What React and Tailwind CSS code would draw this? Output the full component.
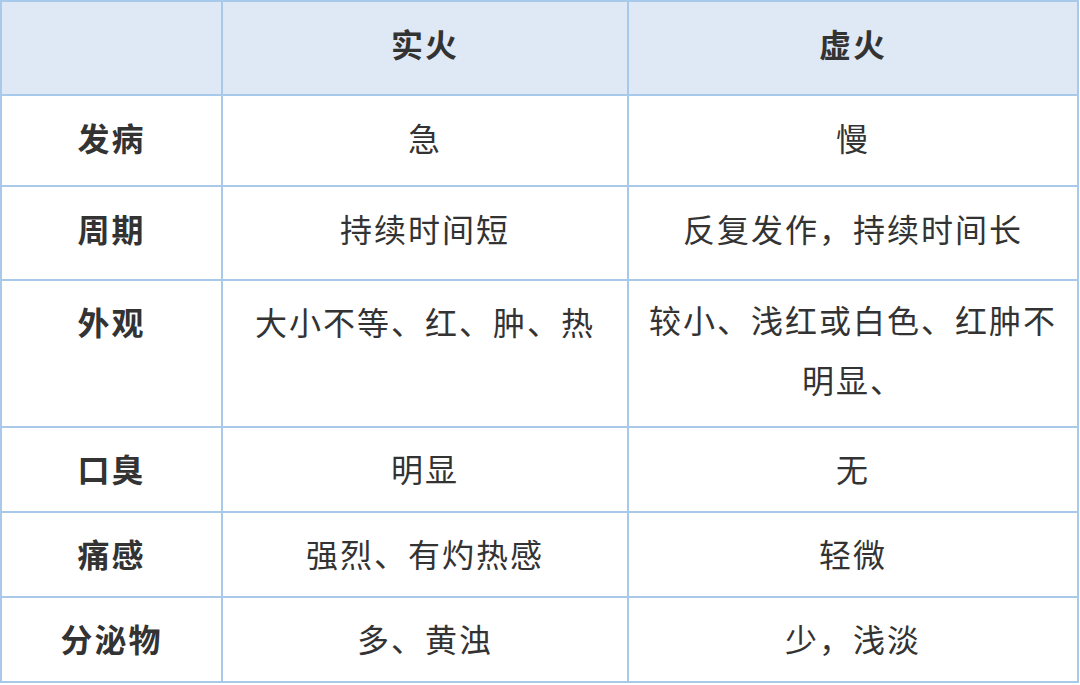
import React from "react";

const rows = [
  { h: "h-[89px]", pb: "pb-[8px]", a: "发病", b: "急", c: "慢" },
  { h: "h-[92px]", pb: "pb-[10px]", a: "周期", b: "持续时间短", c: "反复发作，持续时间长" },
  { h: "h-[145px]", pb: "pb-[10px]", a: "外观", b: "大小不等、红、肿、热", c: "较小、浅红或白色、红肿不明显、", top: true },
  { h: "h-[83px]", pb: "pb-[4px]", a: "口臭", b: "明显", c: "无" },
  { h: "h-[83px]", pb: "pb-[4px]", a: "痛感", b: "强烈、有灼热感", c: "轻微" },
  { h: "h-[83px]", pb: "pb-[4px]", a: "分泌物", b: "多、黄浊", c: "少，浅淡" },
];

const Cell = ({ children, bold, top, pb, className = "" }) => (
  <div
    className={`flex ${top ? "items-start pt-[10px]" : `items-center ${pb}`} justify-center bg-white px-5 ${bold ? "font-bold" : ""} ${className}`}
  >
    <p className="w-full text-justify [text-align-last:center] leading-[60px]">{children}</p>
  </div>
);

export default function App() {
  return (
    <div className="w-[1080px] h-[685px] bg-white">
      <div
        className="grid w-[1079px] grid-cols-[219px_404px_448px] gap-[2px] bg-[#a9c9ea] p-[2px] text-[32px] tracking-[2px] text-[#333333]"
        style={{ fontFamily: '"Noto Sans CJK SC", "Noto Sans", sans-serif' }}
      >
        <div className="h-[92px] bg-[#dfe9f5]" />
        <div className="flex h-[92px] items-center justify-center bg-[#dfe9f5] pb-[10px] font-bold">实火</div>
        <div className="flex h-[92px] items-center justify-center bg-[#dfe9f5] pb-[10px] font-bold">虚火</div>
        {rows.map((r) => (
          <React.Fragment key={r.a}>
            <Cell bold top={r.top} pb={r.pb} className={r.h}>{r.a}</Cell>
            <Cell top={r.top} pb={r.pb} className={r.h}>{r.b}</Cell>
            <Cell pb={r.pb} className={r.h}>{r.c}</Cell>
          </React.Fragment>
        ))}
      </div>
    </div>
  );
}
